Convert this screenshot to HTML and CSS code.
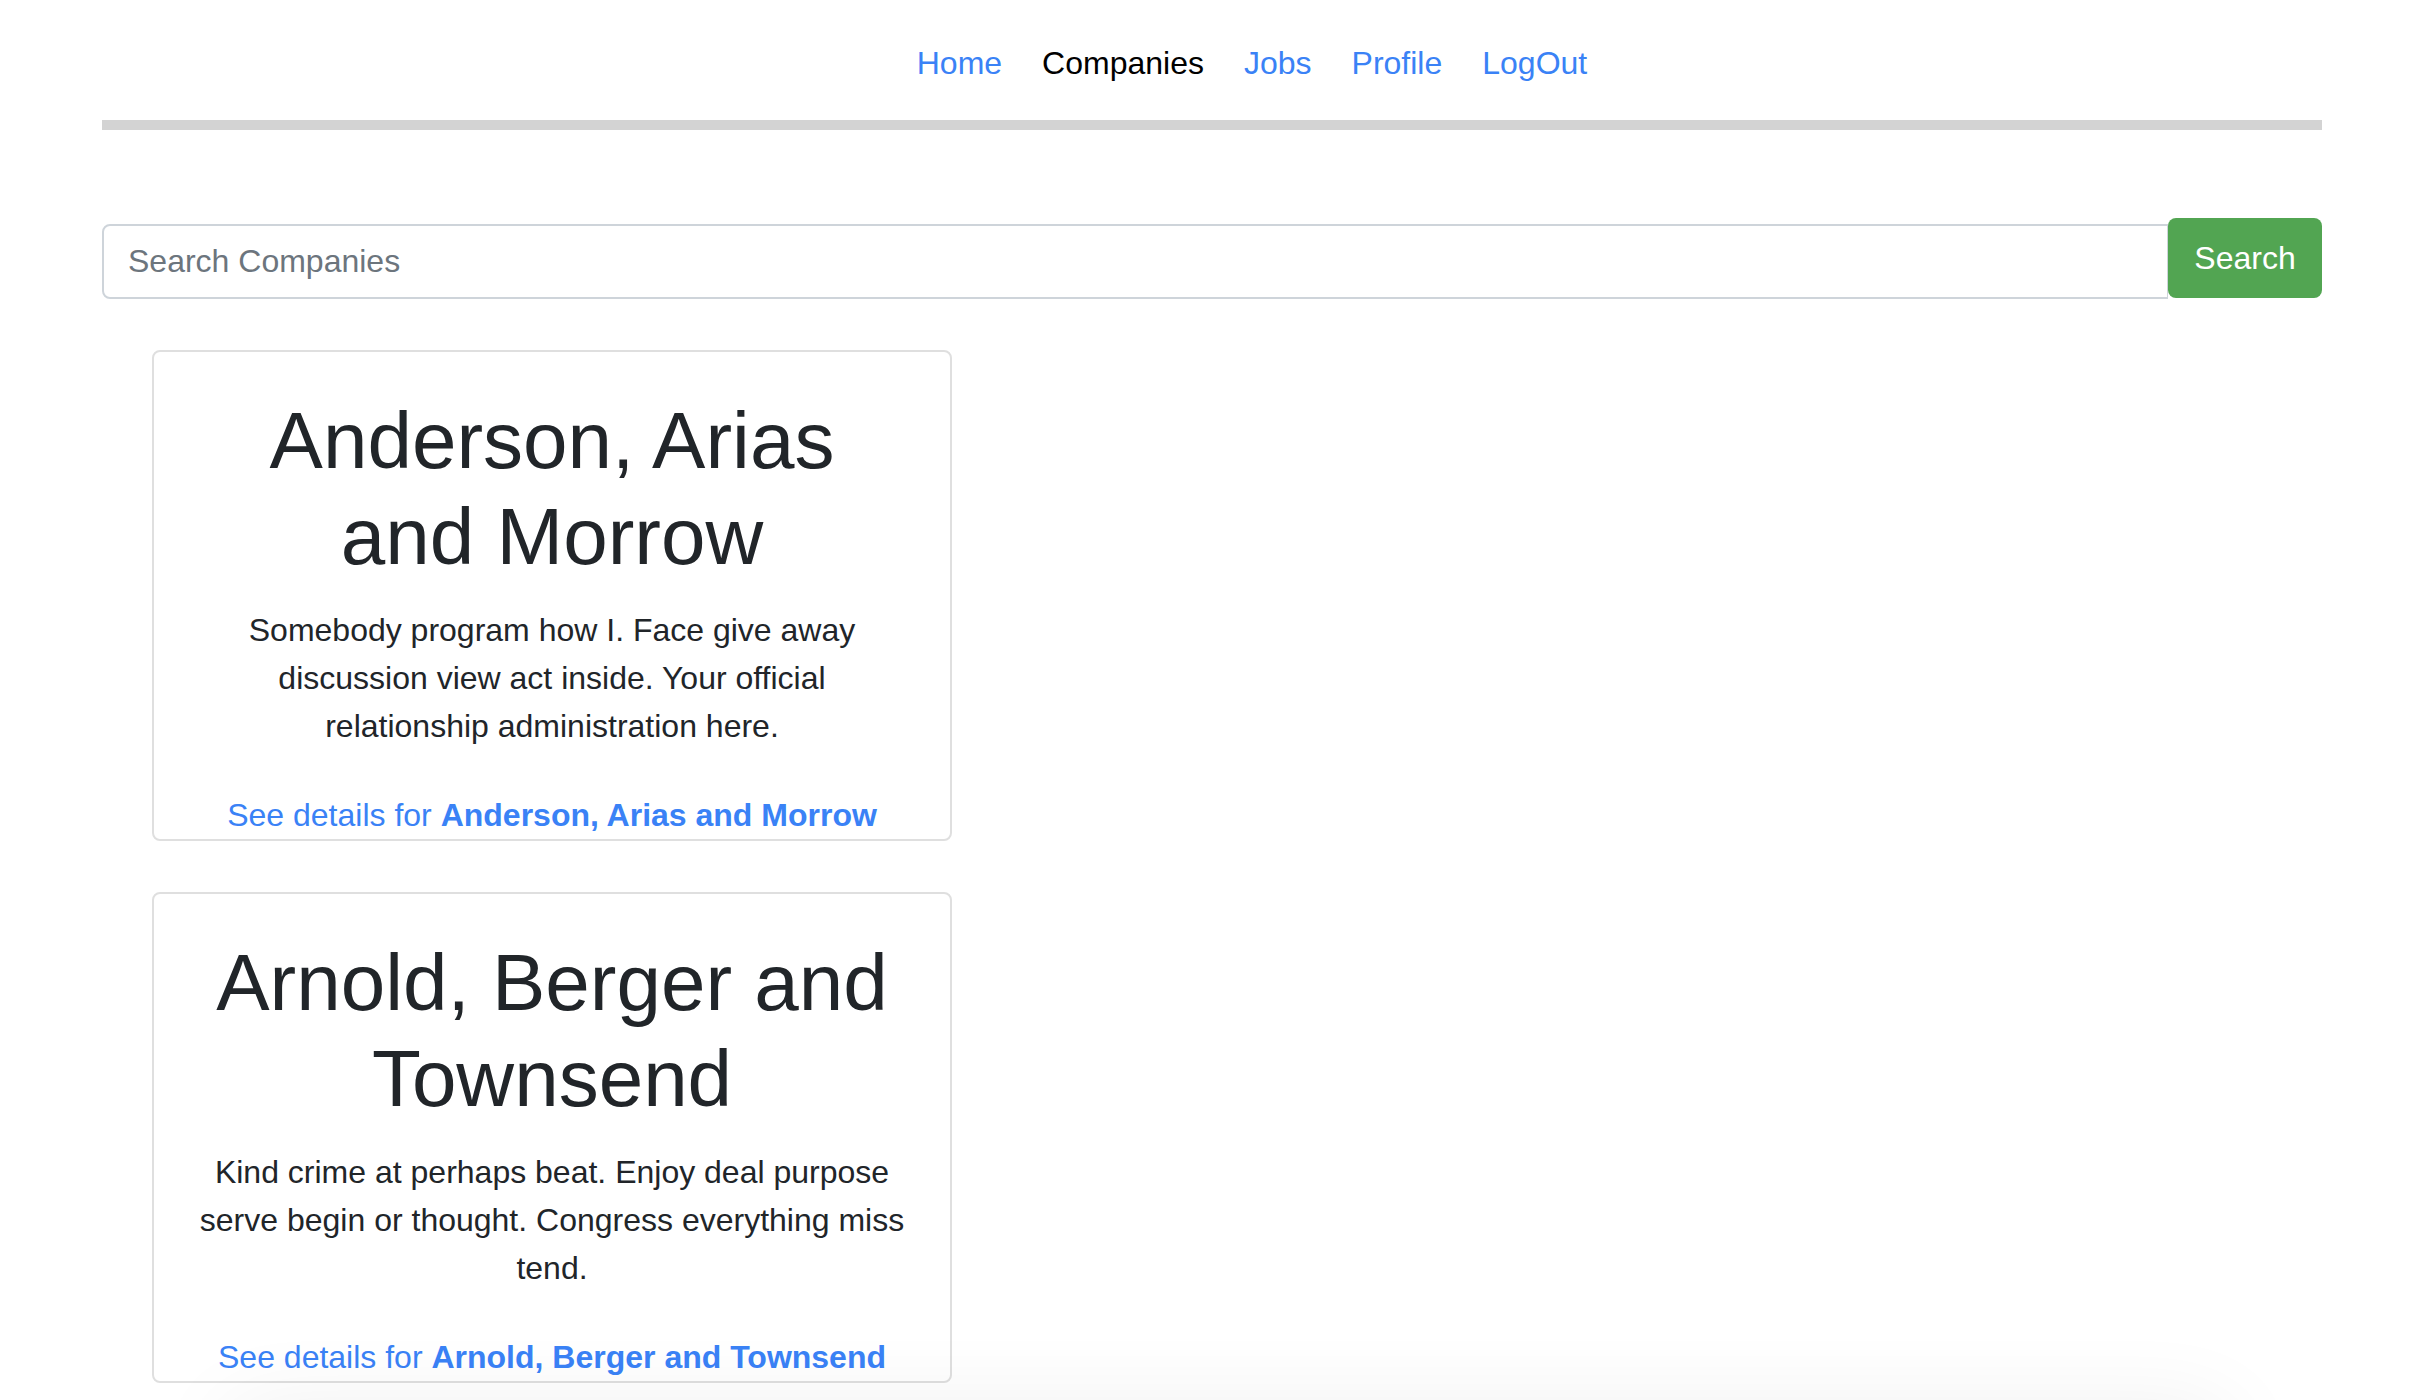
FILE: index.html
```html
<!DOCTYPE html>
<html lang="en">
<head>
<meta charset="utf-8">
<title>Companies</title>
<link rel="stylesheet" href="styles.css">
</head>
<body>
<div class="container">
  <nav class="topnav">
    <ul class="nav-list">
      <li><a class="nav-link" href="#">Home</a></li>
      <li><a class="nav-link active" href="#">Companies</a></li>
      <li><a class="nav-link" href="#">Jobs</a></li>
      <li><a class="nav-link" href="#">Profile</a></li>
      <li><a class="nav-link" href="#">LogOut</a></li>
    </ul>
  </nav>
  <div class="divider"></div>

  <form class="search-form">
    <input class="search-input" type="text" placeholder="Search Companies">
    <button class="search-btn" type="button">Search</button>
  </form>

  <div class="card-list">
    <div class="card">
      <h1 class="card-title">Anderson, Arias and Morrow</h1>
      <p class="card-text">Somebody program how I. Face give away discussion view act inside. Your official relationship administration here.</p>
      <a class="card-link" href="#">See details for <b>Anderson, Arias and Morrow</b></a>
    </div>
    <div class="card">
      <h1 class="card-title">Arnold, Berger and Townsend</h1>
      <p class="card-text">Kind crime at perhaps beat. Enjoy deal purpose serve begin or thought. Congress everything miss tend.</p>
      <a class="card-link" href="#">See details for <b>Arnold, Berger and Townsend</b></a>
    </div>
  </div>
</div>
<div class="window-shadow"></div>
</body>
</html>
```

FILE: styles.css
```css
html, body {
  margin: 0;
  padding: 0;
  background: #ffffff;
}

body {
  font-family: "Liberation Sans", Arial, Helvetica, sans-serif;
  font-size: 32px;
  line-height: 48px;
  color: #212529;
  overflow: hidden;
}

.container {
  width: 2220px;
  margin: 0 0 0 102px;
}

.topnav {
  padding-top: 39px;
}

.nav-list {
  list-style: none;
  margin: 0;
  padding: 0 0 0 80px;
  display: flex;
  justify-content: center;
  gap: 40px;
}

.nav-link {
  color: #3a82f6;
  text-decoration: none;
}

.nav-link.active {
  color: #000000;
}

.divider {
  margin-top: 33px;
  height: 10px;
  background: #d3d3d3;
}

.search-form {
  margin-top: 88px;
  display: flex;
  align-items: flex-start;
}

.search-input {
  flex: 1;
  box-sizing: border-box;
  height: 75px;
  margin-top: 6px;
  padding: 0 24px;
  border: 2px solid #ced4da;
  border-right-width: 1px;
  border-radius: 8px 0 0 8px;
  font-family: "Liberation Sans", Arial, Helvetica, sans-serif;
  font-size: 32px;
  color: #495057;
  background: #fff;
  outline: none;
}

.search-input::placeholder {
  color: #6c757d;
}

.search-btn {
  width: 154px;
  height: 80px;
  border: none;
  border-radius: 8px;
  background: #52a552;
  color: #ffffff;
  font-family: "Liberation Sans", Arial, Helvetica, sans-serif;
  font-size: 32px;
  padding: 0;
}

.card-list {
  margin-top: 51px;
  padding-left: 50px;
  display: flex;
  flex-direction: column;
  gap: 51px;
}

.card {
  box-sizing: border-box;
  width: 800px;
  border: 2px solid #dfdfdf;
  border-radius: 8px;
  padding: 41px 40px 0;
  text-align: center;
  background: #fff;
}

.card-title {
  margin: 0 0 21px;
  font-size: 80px;
  line-height: 96px;
  font-weight: 400;
  color: #212529;
}

.card-text {
  margin: 0 0 41px;
  color: #212529;
}

.card-link {
  display: block;
  color: #3a82f6;
  text-decoration: none;
}

.card-link b {
  font-weight: 700;
}

.window-shadow {
  position: fixed;
  left: 260px;
  right: 230px;
  top: 1440px;
  height: 100px;
  box-shadow: 0 0 90px 30px rgba(0, 0, 0, 0.07);
  pointer-events: none;
}
```
